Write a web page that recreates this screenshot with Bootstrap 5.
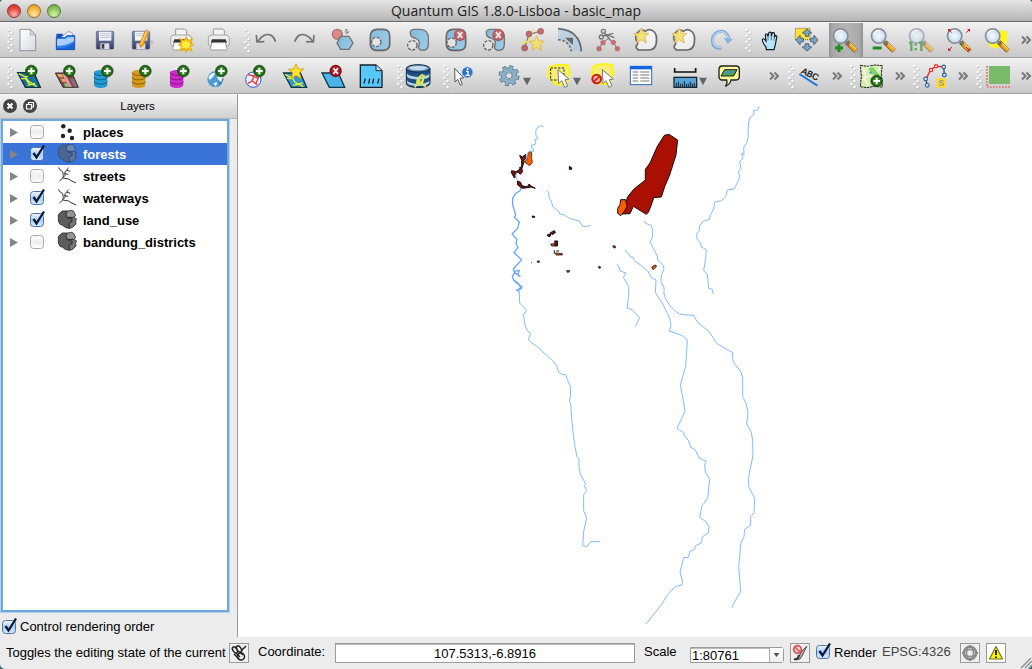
<!DOCTYPE html>
<html lang="en">
<head>
<meta charset="utf-8">
<title>Quantum GIS 1.8.0-Lisboa - basic_map</title>
<link href="https://cdn.jsdelivr.net/npm/bootstrap@5.3.0/dist/css/bootstrap.min.css" rel="stylesheet">
<script src="https://cdn.jsdelivr.net/npm/bootstrap@5.3.0/dist/js/bootstrap.bundle.min.js"></script>
<style>
html,body{height:100%;overflow:hidden}
body{background:#2b6c68;font:13px/16px "Liberation Sans",Arial,sans-serif;color:#000}
svg{display:block;overflow:visible}
.window{width:1032px;height:669px;background:#ececec;border-radius:4px 4px 5px 5px;overflow:hidden}
.titlebar{height:22px;background:linear-gradient(#e6e6e6,#b5b5b5);border-bottom:1px solid #686868;font:14px/22px "Open Sans","Noto Sans",sans-serif;color:#222}
.lights{left:7px;top:4px;gap:6px}
.light{width:14px;height:14px;border-radius:50%;border:1px solid}
.l-red{background:radial-gradient(circle at 50% 80%,#ffb3ad,#e8423d 60%,#b52f2c);border-color:#8c3a36}
.l-yel{background:radial-gradient(circle at 50% 80%,#ffe9a0,#f2b13c 60%,#c98a2b);border-color:#94702f}
.l-grn{background:radial-gradient(circle at 50% 80%,#d5f5a6,#86c158 60%,#5d9a3c);border-color:#54793c}
.toolbar{display:grid;align-items:center;height:36px;background:linear-gradient(#f0f0f0,#c9c9c9);border-top:1px solid #f6f6f6;border-bottom:1px solid #a2a2a2;padding-left:7px}
.bar-edit{grid-template-columns:6px repeat(6,38px) 9px repeat(13,38px) 11px repeat(7,38px) 11px}
.bar-layers{grid-template-columns:6px repeat(10,38px) 10px 38px 8px 45px 50px 43px 39px 44px 44px 54px 20px 6px 37px 19px 6px 38px 19px 6px 38px 19px 6px 38px 12px}
.slot{width:30px;height:30px}
.slot svg{width:30px;height:30px}
.off{opacity:.62}
.pressed{background:linear-gradient(90deg,#929292,#aaa 12%,#b4b4b4 50%,#aaa 88%,#929292);width:34px;height:34px;margin-left:-2px;padding:2px}
.grip{width:6px;height:24px;justify-self:end}
.panel{width:238px;border-right:1px solid #999}
.panel-head{height:25px;background:linear-gradient(#f5f5f5,#d0d0d0);border-bottom:1px solid #b5b5b5;font-size:11.5px}
.panel-btns{left:3px;top:5px;gap:6px}
.panel-title{margin-left:38px}
.tree{width:228px;height:493px;margin-left:1px;background:#fff;border:2px solid #6fa6dd;box-shadow:0 0 0 1px #b4cfe9}
.layer-row{height:22px;font-weight:700}
.layer-row span{padding-top:1px}
.layer-row.sel{background:#3a74d8;color:#fff}
.arrow{width:8px;height:9px;margin-left:7px}
.chk{width:14px;height:14px}
.row-chk{margin-left:12px}
.row-ico{width:20px;height:20px;margin-left:13px;margin-right:6px}
.sel .row-ico{opacity:.55}
.order{margin:3px 0 0 2px;padding-top:4px;gap:4px}
.status{height:32px}
.sbtn{width:20px;height:20px;border:1px solid #9a9a9a;background:#f0f0f0;flex:none}
.field{background:#fff;border:1px solid #9b9b9b;box-shadow:inset 0 1px 0 #bbb}
.map{width:794px;height:543px;background:#fff}
.water{fill:none;stroke:#86b8fc;stroke-width:3;stroke-linejoin:round}
.msg{margin-left:6px;width:223px;font-size:13px;letter-spacing:-.02px}
.coord{margin-left:9px;width:77px;margin-top:-3px}
.coord-box{width:300px;height:20px;line-height:19px}
.scale-l{margin-left:9px;width:46px;margin-top:-3px}
.combo{width:94px;height:16px;line-height:15px;margin-top:4px;padding-left:1px;border-radius:0 3px 3px 0}
.dd{width:14px;border-left:1px solid #aaa;background:linear-gradient(#fff,#eee)}
.b2{margin-left:6px}
.c2{margin:-2px 4px 0 6px}
.rend{width:48px}
.epsg{width:78px;color:#444;margin-top:-3px;font-size:13px}
.b4{margin-left:6px}
</style>
</head>
<body>
<svg width="0" height="0" class="position-absolute">
<defs>
<linearGradient id="gb" x1="0" y1="0" x2="1" y2="1"><stop offset="0" stop-color="#4b9ed5"/><stop offset="1" stop-color="#7ccbf5"/></linearGradient>
<linearGradient id="gp" x1="0" y1="0" x2="1" y2="1"><stop offset="0" stop-color="#fff"/><stop offset="1" stop-color="#d5dae0"/></linearGradient>
<linearGradient id="gf" x1="0" y1="0" x2="0" y2="1"><stop offset="0" stop-color="#8797c5"/><stop offset="1" stop-color="#323b62"/></linearGradient>
<linearGradient id="gc" x1="0" y1="0" x2="0" y2="1"><stop offset="0" stop-color="#f4f9ff"/><stop offset=".5" stop-color="#a9cdf3"/><stop offset="1" stop-color="#d3ecff"/></linearGradient>
<linearGradient id="gw" x1="0" y1="0" x2="0" y2="1"><stop offset="0" stop-color="#fff"/><stop offset=".5" stop-color="#eee"/><stop offset="1" stop-color="#fff"/></linearGradient>
<radialGradient id="gl"><stop offset="0" stop-color="#f4fbff"/><stop offset="1" stop-color="#c5daf0"/></radialGradient>
<g id="dots"><g fill="#aaa"><circle cx="2" cy="2.500" r="1.300"/><circle cx="2" cy="8.500" r="1.300"/><circle cx="2" cy="14.500" r="1.300"/><circle cx="2" cy="20.500" r="1.300"/><circle cx="5" cy="5.500" r="1.300"/><circle cx="5" cy="11.500" r="1.300"/><circle cx="5" cy="17.500" r="1.300"/><circle cx="5" cy="23.500" r="1.300"/></g><g fill="#fafafa"><circle cx="1.500" cy="2" r="1.300"/><circle cx="1.500" cy="8" r="1.300"/><circle cx="1.500" cy="14" r="1.300"/><circle cx="1.500" cy="20" r="1.300"/><circle cx="4.500" cy="5" r="1.300"/><circle cx="4.500" cy="11" r="1.300"/><circle cx="4.500" cy="17" r="1.300"/><circle cx="4.500" cy="23" r="1.300"/></g></g>
<g id="plus"><circle r="17.5" fill="#1d5c12" stroke="#123c0c" stroke-width="2"/><circle r="13" fill="#2f8220"/><path d="M-10 0H10M0-10V10" stroke="#fff" stroke-width="6"/></g>
<g id="kill"><circle r="18.5" fill="#7c0d14"/><circle r="14" fill="#b51b25"/><path d="M-7-9L7 9M7-9L-7 9" stroke="#fff" stroke-width="5"/></g>
<g id="star"><path d="M0-24L6-8L23-8L10 3L15 21L0 11L-14 21L-10 3L-23-7L-6-8Z" fill="#ffe531" stroke="#e5a313" stroke-width="3"/></g>
<g id="db"><path d="M-20-15v37c0 12 40 12 40 0v-37z"/><ellipse cy="-15" rx="20" ry="8"/><path d="M-20-15c0 11 40 11 40 0M-20-2c0 11 40 11 40 0M-20 11c0 11 40 11 40 0" fill="none" stroke="#000" stroke-opacity=".45" stroke-width="2.5"/></g>
<g id="lens"><path d="M18 18L46 45" stroke="#88662a" stroke-width="15"/><path d="M27 25L46 43" stroke="#f4a51f" stroke-width="11"/><path d="M27 21L47 40" stroke="#ffe08c" stroke-width="3"/><path d="M16 16L26 25" stroke="#777" stroke-width="7"/><circle r="21.5" fill="url(#gl)" stroke="#888f99" stroke-width="5"/><path d="M-15-5A16 16 0 0 1 5-16" fill="none" stroke="#fff" stroke-width="4"/></g>
<g id="cursor"><path d="M0 0L2 42L11 33L20 53L29 49L21 30L33 28Z" fill="#fff" stroke="#777" stroke-width="3" stroke-linejoin="round"/></g>
<g id="node"><circle r="14" fill="#e9e9e9" stroke="#222" stroke-width="4" stroke-dasharray="9 4"/></g>
<g id="printer"><path d="M-16-32h27l6 4v16h-33z" fill="#f3f3f3" stroke="#999" stroke-width="3"/><path d="M-31-5q2-9 10-9h42q8 0 11 9v17q0 6-6 6h-51q-6 0-6-6z" fill="#ededed" stroke="#999" stroke-width="2.5"/><path d="M-20-1h41l4 10h-49z" fill="#333"/><path d="M-20 9h40l5 17q1 5-5 5h-40q-6 0-5-5z" fill="#fff" stroke="#999" stroke-width="3"/></g>
<g id="more"><path d="M1 1.5l3.5 3.5L1 8.500M5.500 1.500L9 5 5.500 8.500" fill="none" stroke="#777" stroke-width="2"/></g>
<g id="tri"><path d="M0 0H24L12 23Z" fill="#666"/></g>
<g id="off"><rect x=".5" y=".5" width="13" height="13" rx="3" fill="url(#gw)" stroke="#aaa"/></g>
<g id="on"><rect x=".5" y=".5" width="13" height="13" rx="3" fill="url(#gc)" stroke="#4d73a8"/><path d="M3.500 6L6.500 10.500L14-1.500" fill="none" stroke="#0b1730" stroke-width="2.300"/></g>
<g id="polyg"><g transform="scale(.33333) translate(-171 -276)" stroke="#2a2a2a" stroke-width="2.500" stroke-linejoin="round"><path d="M178 286L187 279L203 279L198 288L202 299L217 303L216 311L207 316L209 331L197 329L188 322L180 319L175 309V291Z" fill="#5c5c5c"/><path d="M203 279L215 277L221 280L227 293L221 298L202 298L198 288Z" fill="#959595"/><path d="M202 299L221 298L229 302L227 311L228 318L218 328L209 331L207 316L216 311L217 303Z" fill="#777"/></g></g>
<g id="lineg"><path transform="scale(.33333) translate(-171 -144)" d="M176 148L178 154L188 161L190 173L188 180L206 183L213 188L228 195M188 180L178 190M190 178L195 172V161L200 157L211 160M200 157L205 149M193 167L205 169" fill="none" stroke="#333" stroke-width="3"/></g>
<g id="pts" fill="#222"><circle cx="6.300" cy="4.300" r="2.200"/><circle cx="12.700" cy="8.700" r="2.200"/><circle cx="6" cy="14" r="2.200"/><circle cx="15" cy="16" r="2.200"/></g>
</defs>
</svg>
<div class="window d-flex flex-column">
<header class="titlebar position-relative text-center"><div class="lights position-absolute d-flex"><span class="light l-red"></span><span class="light l-yel"></span><span class="light l-grn"></span></div><span>Quantum GIS 1.8.0-Lisboa - basic_map</span></header>

<nav class="toolbar bar-edit">
<svg class="grip"><use href="#dots"/></svg>
<span class="slot"><svg viewBox="39 75 90 90"><path d="M60 88H91L107 105V152H60Z" fill="url(#gp)" stroke="#8d939c" stroke-width="3"/><path d="M91 88V105H107Z" fill="#d8dbe0" stroke="#8d939c" stroke-width="2"/></svg></span>
<span class="slot"><svg viewBox="153 75 90 90"><path d="M169 101H187L190 106H223V148H169Z" fill="#0d53c4"/><path d="M176 118L205 94L217 99L220 121Z" fill="#f1f1fa" stroke="#7a7f99" stroke-width="2"/><path d="M169 113H194L200 107H224V149H169Z" fill="#2f82ec" stroke="#0c44ac" stroke-width="2.500"/><path d="M171 145V137Q200 138 222 123V112H203L196 117H171Z" fill="#c8e3ff" opacity=".8"/><path d="M171 145Q205 144 222 128V147H171Z" fill="#1a63d6"/></svg></span>
<span class="slot"><svg viewBox="267 75 90 90"><rect x="289" y="94" width="52" height="53" rx="3" fill="url(#gf)" stroke="#4b5172" stroke-width="2"/><rect x="297" y="95" width="37" height="27" fill="#f4f4f8"/><path d="M300 101h31M300 107h31M300 113h31" stroke="#c0c5da" stroke-width="3"/><rect x="301" y="130" width="27" height="17" fill="#dddde5"/><rect x="305" y="132" width="8" height="14" fill="#3a3f5c"/></svg></span>
<span class="slot"><svg viewBox="381 75 90 90"><ellipse cx="448" cy="126" rx="14" ry="7" fill="#999" opacity=".3"/><rect x="397" y="94" width="52" height="53" rx="3" fill="url(#gf)" stroke="#4b5172" stroke-width="2"/><rect x="405" y="95" width="37" height="27" fill="#f4f4f8"/><path d="M408 101h31M408 107h31" stroke="#c0c5da" stroke-width="3"/><rect x="409" y="130" width="27" height="17" fill="#dddde5"/><path d="M437 90L447 94L430 136L421 142L419 130Z" fill="#f9ad25" stroke="#c47b10" stroke-width="2"/><path d="M437 90L447 94L445 99L435 95Z" fill="#e9a0a0"/><path d="M438 98L423 131" stroke="#ffe07c" stroke-width="3"/></svg></span>
<span class="slot"><svg viewBox="495 75 90 90"><use href="#printer" x="543" y="119"/><path d="M558 112L563 124L576 117L570 129L579 134L569 139L575 152L562 145L558 155L553 145L540 151L546 139L537 134L546 129L541 117L553 123Z" fill="#ffed45" stroke="#eeb100" stroke-width="4"/></svg></span>
<span class="slot"><svg viewBox="609 75 90 90"><use href="#printer" x="656" y="119"/></svg></span>
<svg class="grip"><use href="#dots"/></svg>
<span class="slot"><svg viewBox="30 75 90 90"><path d="M107 125Q96 96 73 106Q62 111 54 124M49 105L51 126L73 125" fill="none" stroke="#727272" stroke-width="5"/></svg></span>
<span class="slot"><svg viewBox="144 75 90 90"><path d="M164 125Q175 96 198 106Q210 111 218 124M222 105L220 126L198 125" fill="none" stroke="#727272" stroke-width="5"/></svg></span>
<span class="slot off"><svg viewBox="258 75 90 90"><circle cx="292" cy="103" r="15" fill="#dc5051" stroke="#8a2f31" stroke-width="4"/><path d="M302 109H327L339 129L327 148H302L291 129Z" fill="url(#gb)" stroke="#333" stroke-width="4"/><path d="M315 89H321V99M315 94L321 101L328 94" fill="none" stroke="#333" stroke-width="3"/></svg></span>
<span class="slot off"><svg viewBox="372 75 90 90"><path d="M391 110Q390 90 410 88H431Q450 89 449 110V133Q449 150 430 151H409Q392 150 391 133Z" fill="url(#gb)" stroke="#222" stroke-width="5"/><use href="#node" x="409" y="126"/></svg></span>
<span class="slot off"><svg viewBox="486 75 90 90"><path d="M511 100Q509 88 526 88H541Q566 89 565 116V134Q564 151 546 151Q530 148 538 132Q540 120 525 114Q512 112 511 100Z" fill="url(#gb)" stroke="#333" stroke-width="4"/><use href="#node" x="517" y="136"/></svg></span>
<span class="slot off"><svg viewBox="600 75 90 90"><path d="M619 110Q618 90 638 88H659Q678 89 677 110V133Q677 150 658 151H637Q620 150 619 133Z" fill="url(#gb)" stroke="#222" stroke-width="5"/><use href="#node" x="635" y="128"/><use href="#kill" x="660" y="105"/></svg></span>
<span class="slot off"><svg viewBox="714 75 90 90"><path d="M739 100Q737 88 754 88H769Q794 89 793 116V134Q792 151 774 151Q758 148 766 132Q768 120 753 114Q740 112 739 100Z" fill="url(#gb)" stroke="#333" stroke-width="4"/><use href="#node" x="745" y="136"/><use href="#kill" x="775" y="105"/></svg></span>
<span class="slot off"><svg viewBox="48 75 90 90"><path d="M74 143L87 103L121 94" stroke="#444" stroke-width="4" fill="none"/><path d="M61 132L86 123L100 87" stroke="#ffee00" stroke-width="4" fill="none"/><g fill="#a92428" stroke="#701216" stroke-width="2"><circle cx="74" cy="144" r="9"/><circle cx="87" cy="102" r="9"/><circle cx="122" cy="94" r="9"/></g><use href="#star" x="110" y="131"/></svg></span>
<span class="slot off"><svg viewBox="162 75 90 90"><path d="M174 86Q240 91 244 154H214Q209 122 174 117Z" fill="#a7c9e5"/><path d="M174 86Q240 91 244 154" fill="none" stroke="#222" stroke-width="5"/><path d="M174 119Q208 121 214 154" fill="none" stroke="#333" stroke-width="5" stroke-dasharray="8 5"/><path d="M195 113H219V135Z" fill="#222"/></svg></span>
<span class="slot off"><svg viewBox="276 75 90 90"><path d="M296 146L308 128L325 116L340 128L352 146" fill="none" stroke="#333" stroke-width="3"/><g fill="#b33438"><circle cx="297" cy="146" r="8"/><circle cx="309" cy="128" r="8"/><circle cx="340" cy="127" r="8"/><circle cx="352" cy="146" r="8"/></g><g fill="none" stroke="#333" stroke-width="4"><circle cx="310" cy="94" r="6"/><circle cx="304" cy="111" r="6"/><path d="M313 99L331 120M309 108L340 100M318 103L343 113"/></g></svg></span>
<span class="slot off"><svg viewBox="390 75 90 90"><path id="blob" d="M409 122Q404 106 412 98Q423 85 436 94Q450 83 463 96Q472 105 469 128Q467 151 444 150H416Q403 143 412 133Q415 129 409 122Z" fill="#fff" stroke="#222" stroke-width="5"/><use href="#star" x="424" y="108"/></svg></span>
<span class="slot off"><svg viewBox="504 75 90 90"><use href="#blob" x="114"/><use href="#star" x="538" y="108"/></svg></span>
<span class="slot off"><svg viewBox="618 75 90 90"><path d="M665 144Q637 147 637 120Q640 95 665 94Q682 96 687 117" fill="none" stroke="#3b86dc" stroke-width="9"/><path d="M665 143Q638 145 638 120Q641 96 665 95Q681 97 686 117" fill="none" stroke="#a9cdf3" stroke-width="4"/><path d="M671 113L699 118L683 132Z" fill="#529be8"/></svg></span>
<svg class="grip me-1"><use href="#dots"/></svg>
<span class="slot"><svg viewBox="15 75 90 90"><path d="M49 149L48 141Q37 128 37 119Q39 114 44 118L48 123L46 106Q47 100 52 103L54 110L56 99Q60 94 64 99V108L67 98Q73 96 74 103L73 112L76 107Q82 106 80 113L76 134L72 149Z" fill="#b5e5fc" stroke="#12181c" stroke-width="3.500"/><path d="M54 110V121M64 108V121M73 112L72 122" stroke="#26455a" stroke-width="2"/></svg></span>
<span class="slot"><svg viewBox="129 75 90 90"><path d="M136 85H180V119H136Z" fill="#ffe038" stroke="#222" stroke-width="2" stroke-dasharray="3 3"/><g fill="#7da4c4" stroke="#36516b" stroke-width="2.500"><path id="pa" d="M171 87L185 99L177 100L176 109H166L165 100L157 99Z"/><use href="#pa" transform="rotate(90 171 120)"/><use href="#pa" transform="rotate(180 171 120)"/><use href="#pa" transform="rotate(270 171 120)"/></g></svg></span>
<span class="slot pressed"><svg viewBox="243 75 90 90"><use href="#lens" x="272" y="108"/><path d="M255 144H279M267 133V156" stroke="#218b22" stroke-width="9"/></svg></span>
<span class="slot"><svg viewBox="357 75 90 90"><use href="#lens" x="386" y="108"/><path d="M368 144H395" stroke="#218b22" stroke-width="9"/></svg></span>
<span class="slot off"><svg viewBox="471 75 90 90"><use href="#lens" x="500" y="108"/><path d="M477 128H484V153M507 128H514V153M497 131V137M497 144V151" stroke="#218b22" stroke-width="7" fill="none"/></svg></span>
<span class="slot"><svg viewBox="585 75 90 90"><use href="#lens" x="614" y="108"/><g stroke="#d5171c" stroke-width="3" fill="#d5171c"><path d="M595 88L605 98M659 88L649 98M596 151L606 141M658 151L648 141"/><path d="M594 87h9l-9 9zM660 87v9l-9-9zM594 152v-9l9 9zM660 152h-9l9-9z" stroke="none"/></g></svg></span>
<span class="slot"><svg viewBox="699 75 90 90"><path d="M735 95Q755 90 770 95Q774 115 767 133Q745 149 722 140L712 126Z" fill="#fff31c" stroke="#f5ee55" stroke-width="4"/><use href="#lens" x="728" y="108"/></svg></span>
<svg width="10" height="10"><use href="#more"/></svg>
</nav>

<nav class="toolbar bar-layers">
<svg class="grip"><use href="#dots"/></svg>
<span class="slot"><svg viewBox="39 183 90 90"><path d="M53 218H102L121 262H76Z" fill="#16729c" stroke="#103546" stroke-width="4"/><path d="M56 221L76 231L85 243L110 260M76 231L88 226L101 229M63 236H77L88 253M82 256L105 250" fill="none" stroke="#e8f52b" stroke-width="4"/><use href="#plus" x="94" y="213"/></svg></span>
<span class="slot"><svg viewBox="153 183 90 90"><path d="M166 219H216L235 262H189Z" fill="#7c4a49" stroke="#333" stroke-width="3"/><path d="M171 222H184L190 232H177ZM181 236H193L199 246H188Z" fill="#eba957"/><path d="M186 222H196L216 260H206Z" fill="#f08fa0"/><path d="M192 250H203L208 260H195Z" fill="#8cc275"/><path d="M210 236H221L232 260H222Z" fill="#857184"/><use href="#plus" x="208" y="213"/></svg></span>
<span class="slot"><svg viewBox="267 183 90 90"><use href="#db" x="302" y="233" fill="#209ad1"/><use href="#plus" x="322" y="213"/></svg></span>
<span class="slot"><svg viewBox="381 183 90 90"><use href="#db" x="416" y="233" fill="#d59a1d"/><use href="#plus" x="436" y="213"/></svg></span>
<span class="slot"><svg viewBox="495 183 90 90"><use href="#db" x="530" y="233" fill="#cf28cd"/><use href="#plus" x="550" y="213"/></svg></span>
<span class="slot"><svg viewBox="609 183 90 90"><circle cx="646" cy="238" r="24" fill="#4b9bd0"/><path d="M625 233Q631 217 646 218L640 230L629 240ZM650 232L666 224Q672 238 667 248L657 241ZM640 250L652 246L648 260Z" fill="#e8f5fd"/><path d="M657 254A24 24 0 0 0 669 235" stroke="#205b8c" stroke-width="3" fill="none"/><use href="#plus" x="664" y="213"/></svg></span>
<span class="slot"><svg viewBox="3 183 90 90"><circle cx="40" cy="239" r="23" fill="#eceef8" stroke="#3155da" stroke-width="3"/><path d="M24 224L43 228L36 242L52 255M37 228L55 234L48 250M34 244L24 250" fill="none" stroke="#e93237" stroke-width="4"/><use href="#plus" x="58" y="213"/></svg></span>
<span class="slot"><svg viewBox="117 183 90 90"><path d="M131 219H181L200 262H154Z" fill="#3397cc" stroke="#103546" stroke-width="4"/><path d="M135 223L158 235L165 247L190 260M141 235L160 236M160 256L188 249" fill="none" stroke="#e8f52b" stroke-width="4"/><use href="#star" x="168" y="215"/></svg></span>
<span class="slot"><svg viewBox="231 183 90 90"><path d="M246 219H295L314 262H268Z" fill="#49b5ea" stroke="#103546" stroke-width="4"/><use href="#kill" x="287" y="213"/></svg></span>
<span class="slot"><svg viewBox="345 183 90 90"><path d="M361 195H408L426 212V262H361Z" fill="#57c8fb" stroke="#18212a" stroke-width="4"/><path d="M408 195V212H426" fill="#b8e9ff" stroke="#18212a" stroke-width="3"/><path d="M376 236L372 251M389 236L386 251M401 236L398 251M417 236L413 251" stroke="#18212a" stroke-width="4"/></svg></span>
<svg class="grip"><use href="#dots"/></svg>
<span class="slot"><svg viewBox="489 183 90 90"><path d="M499 205V250C499 267 570 267 570 250V205Z" fill="#1d4d84" stroke="#17283b" stroke-width="3"/><path d="M501 219C504 234 566 234 568 219V229C566 242 504 242 501 229ZM501 240C504 255 566 255 568 240V248C566 261 504 261 501 248Z" fill="#b4d2e8"/><ellipse cx="534" cy="205" rx="35" ry="11" fill="#6695c7" stroke="#17283b" stroke-width="3"/><ellipse cx="534" cy="204" rx="27" ry="6" fill="#c7dbed"/><path d="M549 223Q533 231 531 248Q537 256 549 240L552 224L546 253L558 260M524 262Q533 252 540 238" fill="none" stroke="#dce94e" stroke-width="6"/></svg></span>
<svg class="grip"><use href="#dots"/></svg>
<span class="slot"><svg viewBox="627 183 90 90"><path d="M644 205L645 246L653 238L661 256L667 253L660 235L671 234Z" fill="#fff" stroke="#555" stroke-width="3"/><circle cx="682" cy="217" r="16" fill="#2e72c4" stroke="#91b7e2" stroke-width="2"/><path d="M678 214H684V225M676 226H690" stroke="#fff" stroke-width="4" fill="none"/><circle cx="683" cy="207" r="3" fill="#fff"/></svg></span>
<span class="slot"><svg viewBox="-18 183 90 90"><circle cx="27" cy="227" r="25" fill="none" stroke="#54768b" stroke-width="13" stroke-dasharray="11 8.600"/><circle cx="27" cy="227" r="18" fill="none" stroke="#54768b" stroke-width="14"/><circle cx="27" cy="227" r="25" fill="none" stroke="#8ab0c5" stroke-width="8" stroke-dasharray="9 10.600" stroke-dashoffset="-1"/><circle cx="27" cy="227" r="17" fill="none" stroke="#8ab0c5" stroke-width="11"/><circle cx="27" cy="227" r="9" fill="#e3e3e3" stroke="#466375" stroke-width="2"/><use href="#tri" x="69" y="233"/></svg></span>
<span class="slot"><svg viewBox="132 183 90 90"><path id="yl" d="M148 202Q171 190 205 197L209 220L197 255L167 252L145 227Z" fill="#f7ee78" stroke="#fff11e" stroke-width="7" stroke-linejoin="round"/><rect x="152" y="204" width="40" height="36" fill="none" stroke="#222" stroke-width="3" stroke-dasharray="7 4"/><use href="#cursor" x="174" y="209"/><use href="#tri" x="219" y="233"/></svg></span>
<span class="slot"><svg viewBox="261 183 90 90"><use href="#yl" x="131" y="-2"/><circle cx="290" cy="237" r="13" fill="#f4b7a0" stroke="#cf1c12" stroke-width="6"/><path d="M281 245L299 229" stroke="#cf1c12" stroke-width="5"/><use href="#cursor" x="307" y="209"/></svg></span>
<span class="slot"><svg viewBox="378 183 90 90"><rect x="391" y="199" width="64" height="55" fill="#fff" stroke="#2f69bd" stroke-width="3"/><path d="M390 198H456V208H390Z" fill="#1864e6"/><path d="M398 216H415M398 225H415M398 234H415M398 243H415M421 216H448M421 225H448M421 234H448M421 243H448" stroke="#777" stroke-width="3"/></svg></span>
<span class="slot"><svg viewBox="510 183 90 90"><path d="M524 204V216H587V204" fill="none" stroke="#111" stroke-width="5"/><rect x="522" y="232" width="68" height="30" fill="#5aa4d6" stroke="#182733" stroke-width="4"/><path d="M529 261V249M535 261V245M541 261V251M547 261V251M553 261V243M559 261V251M565 261V251M571 261V245M577 261V251M583 261V249" stroke="#182733" stroke-width="3"/><use href="#tri" x="597" y="233"/></svg></span>
<span class="slot"><svg viewBox="642 183 90 90"><path d="M665 198H710Q718 199 718 207V231Q717 240 709 240H693Q691 253 676 259Q683 252 680 240H665Q658 239 657 231V207Q658 199 665 198Z" fill="#fffb9b" stroke="#222" stroke-width="4"/><path d="M674 209H711L701 228H663Z" fill="#54a53a" stroke="#222" stroke-width="3"/><path d="M672 222L682 214L693 219L703 212" fill="none" stroke="#4c90d7" stroke-width="5"/></svg></span>
<svg width="10" height="10"><use href="#more" x="1"/></svg>
<svg class="grip"><use href="#dots"/></svg>
<span class="slot"><svg viewBox="132 183 90 90"><path d="M148 222L202 257" stroke="#1979dd" stroke-width="6"/><g transform="translate(152 219) rotate(25)"><text font-family="Liberation Sans" font-size="26" textLength="54" lengthAdjust="spacingAndGlyphs" fill="#111" stroke="#111">ABC</text></g></svg></span>
<svg width="10" height="10"><use href="#more" x="1"/></svg>
<svg class="grip"><use href="#dots"/></svg>
<span class="slot"><svg viewBox="321 183 90 90"><path d="M334 196L356 199L378 195L400 197L397 220L400 261L376 259L354 263L334 260L337 230Z" fill="#d5edae" stroke="#222" stroke-width="3" stroke-dasharray="8 2"/><path d="M356 205L373 202L381 213L391 222L385 234L367 217Z" fill="#7ed45f"/><path d="M359 218L367 212L371 223Z" fill="#5599e4"/><path d="M340 204L350 223L345 236L358 256M363 199L347 212L340 221M340 240L360 227L378 236M392 203L386 218" stroke="#f4f9e9" stroke-width="4" fill="none"/><use href="#plus" x="383" y="243"/></svg></span>
<svg width="10" height="10"><use href="#more" x="1"/></svg>
<svg class="grip"><use href="#dots"/></svg>
<span class="slot"><svg viewBox="507 183 90 90"><path d="M529 235L542 209L558 199L581 200" stroke="#e82820" stroke-width="4" fill="none"/><path d="M527 236L532 256M581 201L583 224" stroke="#2a4d71" stroke-width="4"/><rect x="559" y="235" width="29" height="28" rx="3" fill="#ffdb24"/><text x="565" y="259" font-family="Liberation Sans" font-weight="700" font-size="26" fill="#999">S</text><g fill="#fff" stroke="#e82820" stroke-width="3.500"><circle cx="543" cy="210" r="5"/><circle cx="558" cy="199" r="5"/></g><g fill="#d6ecfa" stroke="#32618b" stroke-width="3.500"><circle cx="581" cy="201" r="5.500"/><circle cx="527" cy="237" r="5.500"/><circle cx="532" cy="256" r="5.500"/><circle cx="583" cy="225" r="5.500"/></g></svg></span>
<svg width="10" height="10"><use href="#more" x="1"/></svg>
<svg class="grip"><use href="#dots"/></svg>
<span class="slot"><svg viewBox="696 183 90 90"><rect x="717" y="198" width="63" height="54" fill="#7abb6b"/><path d="M711 198V261H783" fill="none" stroke="#e46d6b" stroke-width="5" stroke-dasharray="5 4"/></svg></span>
<svg width="10" height="10"><use href="#more" x="1"/></svg>
</nav>

<main class="d-flex flex-grow-1">
<aside class="panel d-flex flex-column">
<div class="panel-head position-relative d-flex align-items-center justify-content-center"><div class="panel-btns position-absolute d-flex"><svg width="14" height="14"><circle cx="7" cy="7" r="7" fill="#444"/><path d="M4.500 4.500L9.500 9.500M9.500 4.500L4.500 9.500" stroke="#fff" stroke-width="2"/></svg><svg width="14" height="14"><circle cx="7" cy="7" r="7" fill="#444"/><path d="M5.500 5.500V3.500H10.500V8H8.500M3.500 5.500H8.500V10H3.500Z" fill="none" stroke="#fff" stroke-width="1.200"/></svg></div><span class="panel-title">Layers</span></div>
<div class="tree" id="tree"></div>
<label class="order d-flex align-items-center"><svg class="chk" viewBox="0 0 14 14"><use href="#on"/></svg><span>Control rendering order</span></label>
</aside>
<svg class="map" viewBox="238 94 794 543">
<g class="water" transform="translate(500 100) scale(.33333)">
<path d="M131 80L121 77L110 86L107 95L108 106L114 116L104 120L108 127L105 134L95 135L93 143L101 146L100 154L90 153"/>
<path d="M56 252L63 262L60 272L46 281L38 295L38 315L47 345L43 352L58 366L53 385L36 402L51 418L48 432L54 442L42 458L65 479L40 507L42 514L58 511L54 523L60 530L44 517L37 530L41 541L55 550L64 566L47 572" stroke="#65a6f7" stroke-width="3.800"/>
<path d="M141 271L146 278L148 295L155 306L158 320L175 333L180 342L192 344L208 355L239 364L246 377L258 380L271 376"/>
</g>
<g class="water" transform="translate(500 280) scale(.33333)">
<path d="M43 0L49 8L66 20L54 29L58 39" stroke="#65a6f7" stroke-width="3.800"/>
<path d="M58 39L59 69L80 91L71 104L74 132L82 153L92 160L85 180L115 203L132 219L157 241L170 258L176 276L186 283L198 285L202 299L211 319L212 347L208 363L212 370L214 405L219 456L225 500L231 530L237 538L237 560L242 585L257 611L253 617L260 632L251 643L251 692L260 714L251 754L248 796L260 801L272 785H300"/>
</g>
<g class="water" transform="translate(600 96) scale(.33333)">
<path d="M476 31L473 42L461 44L462 56L449 65L446 81L444 107L445 121L441 139L431 155L432 177L425 171L429 188L419 196L423 218L415 227L419 239L416 253L402 279L382 282L377 301L365 314L344 318L341 339L331 357L329 370L309 376L298 391L298 406L290 413L291 429L302 441L304 453L319 461L317 486L311 524L322 536L326 577L337 580L340 595"/>
<path d="M133 374L137 382L153 388L158 402L157 424L150 438L163 463L172 480L173 492L190 509L192 520L184 537L183 558L192 574L192 594Q200 628 238 654Q258 658 281 658L293 680L327 706L350 742L398 770L398 791L406 806L423 828L428 847V901L438 922L444 949L440 984L453 1006L458 1032L459 1079L446 1141V1172L464 1207L462 1251L452 1262V1288L434 1300L432 1322L423 1340L416 1411L422 1486L399 1526L398 1535"/>
<path d="M75 462L93 484L98 482L103 494L123 508L144 526L154 545L168 552L166 590L189 625L209 667L213 689L208 705L247 719L262 732L257 812L245 852L241 868L249 909L255 945L245 967L231 997L251 1010L253 1019L266 1034L272 1054L285 1060L297 1085L319 1096L314 1105L316 1128L329 1150L323 1208L306 1229L299 1264L318 1277L327 1292L325 1310L307 1323L304 1341L287 1349L283 1361L269 1366L266 1384L251 1385L240 1430L248 1458L244 1468L226 1471L200 1500L185 1525L138 1584"/>
<path d="M50 504L55 508L60 525L78 531L70 544L86 571L86 601L81 636L96 641L119 665L106 692"/>
</g>
<g transform="translate(500 100) scale(.33333)" stroke="#111" stroke-width="3" stroke-linejoin="round">
<path d="M493 106L507 103L533 120L528 165L509 225L494 260L484 291L461 293L454 315L445 337L439 343L400 319L390 341L366 342L376 319L382 292L401 268L436 240V208L450 189L472 139Z" fill="#aa1001"/>
<path d="M362 299H377L381 320L373 334L362 347L353 340V325L360 314Z" fill="#ff5b00"/>
<path d="M86 156L95 157V176L97 187L89 197L75 187L81 176Z" fill="#ff5b00" stroke="#5e3a1c"/>
<g fill="#7e1009"><path d="M59 166L67 171L77 163L78 173L72 186L66 205L67 216L61 223L54 216L45 222L48 230L43 234L34 218L35 212L48 215L60 208L59 202L65 201V181Z"/><path d="M52 243L62 247L65 256L75 260L85 258L87 252L95 259L106 265L93 261L82 263L67 265L53 255Z"/><path d="M208 199L215 203V208H208ZM97 348L104 349V352H97ZM142 404L153 401L150 410L143 408ZM151 398L164 392L166 398L157 404Z"/><path d="M164 423L173 423L172 438H165Z"/></g>
<path d="M152 432L161 431L165 438H155ZM167 459L187 461V465H168ZM338 438L345 437L347 443L342 444ZM112 483H118V487H112ZM200 512L208 511V516L202 517ZM295 500L300 499L302 504L297 505ZM456 501L465 495L470 498L460 509L456 505Z" fill="#ef5a13" stroke-width="2.500"/>
<path d="M163 451V461M169 453H177M94 488H96" fill="none"/>
</g>
<path class="water" transform="translate(500 100) scale(.33333)" d="M93 152L83 158L81 172L73 184M50 218L46 230L54 243"/>
</svg>
</main>
<footer class="status d-flex align-items-center text-nowrap position-relative">
<span class="msg">Toggles the editing state of the current</span>
<span class="sbtn"><svg width="18" height="18"><g fill="#eee" stroke="#222" stroke-width="1.500"><ellipse cx="5" cy="6" rx="3.500" ry="2" transform="rotate(55 5 6)"/><ellipse cx="9" cy="5" rx="3.500" ry="2" transform="rotate(55 9 5)"/><circle cx="11" cy="12.500" r="3.500"/><path d="M6 9L10 13M10 8L13 11M12 6L16 2M4 10L9 15"/></g></svg></span>
<span class="coord">Coordinate:</span>
<span class="field coord-box text-center">107.5313,-6.8916</span>
<span class="scale-l">Scale</span>
<span class="field combo d-flex justify-content-between"><span>1:80761</span><span class="dd"><svg width="13" height="13"><path d="M3.500 5H9.500L6.500 9Z" fill="#555"/></svg></span></span>
<span class="sbtn b2"><svg width="18" height="18"><path d="M16 2Q10 7 8 12L5 16Q10 16 11 12Z" fill="#aaa" stroke="#555"/><path d="M3 15Q7 16 8 11" stroke="#333" stroke-width="2" fill="none"/><circle cx="6.500" cy="5.500" r="3.800" fill="#f8d4d2" stroke="#dc5552" stroke-width="1.800"/><path d="M4 3L9 8" stroke="#dc5552" stroke-width="1.500"/></svg></span>
<svg class="chk c2" viewBox="0 0 14 14"><use href="#on"/></svg>
<span class="rend">Render</span><span class="epsg">EPSG:4326</span>
<span class="sbtn"><svg width="18" height="18"><g fill="none" stroke="#888" stroke-width="1.200"><circle cx="9" cy="9" r="6.500" fill="#c4c4c4" stroke-width="1.800"/><ellipse cx="9" cy="9" rx="3.500" ry="6.500"/><ellipse cx="9" cy="9" rx="6.500" ry="3.500"/></g><circle cx="9" cy="9" r="2.500" fill="#f0f0f0"/><path d="M9 1V4M9 14V17M1 9H4M14 9H17" stroke="#888" stroke-width="2"/></svg></span>
<span class="sbtn b4 bg-white"><svg width="18" height="18"><path d="M9 2.500L15.500 15H2.500Z" fill="#fff200" stroke="#75751a" stroke-width="1.200" stroke-linejoin="round"/><path d="M9 6V11M9 12.500V14" stroke="#111" stroke-width="1.800"/></svg></span>
<svg class="position-absolute bottom-0 end-0" width="12" height="12"><path d="M1 11L11 1M5 11L12 4M9 11L12 8" stroke="#888" stroke-width="1.200"/></svg>
</footer>
</div>
<script>
const layers=[["places",0,"pts"],["forests",1,"polyg"],["streets",0,"lineg"],["waterways",1,"lineg"],["land_use",1,"polyg"],["bandung_districts",0,"polyg"]];
document.getElementById("tree").innerHTML=layers.map(([name,shown,icon])=>`<div class="layer-row d-flex align-items-center ${name=="forests"?"sel":""}"><svg class="arrow" viewBox="0 0 8 9"><path d="M0 0L8 4.500L0 9Z" fill="#858585"/></svg><svg class="chk row-chk" viewBox="0 0 14 14"><use href="#${shown?"on":"off"}"/></svg><svg class="row-ico" viewBox="0 0 20 20"><use href="#${icon}"/></svg><span>${name}</span></div>`).join("");
</script>
</body>
</html>
